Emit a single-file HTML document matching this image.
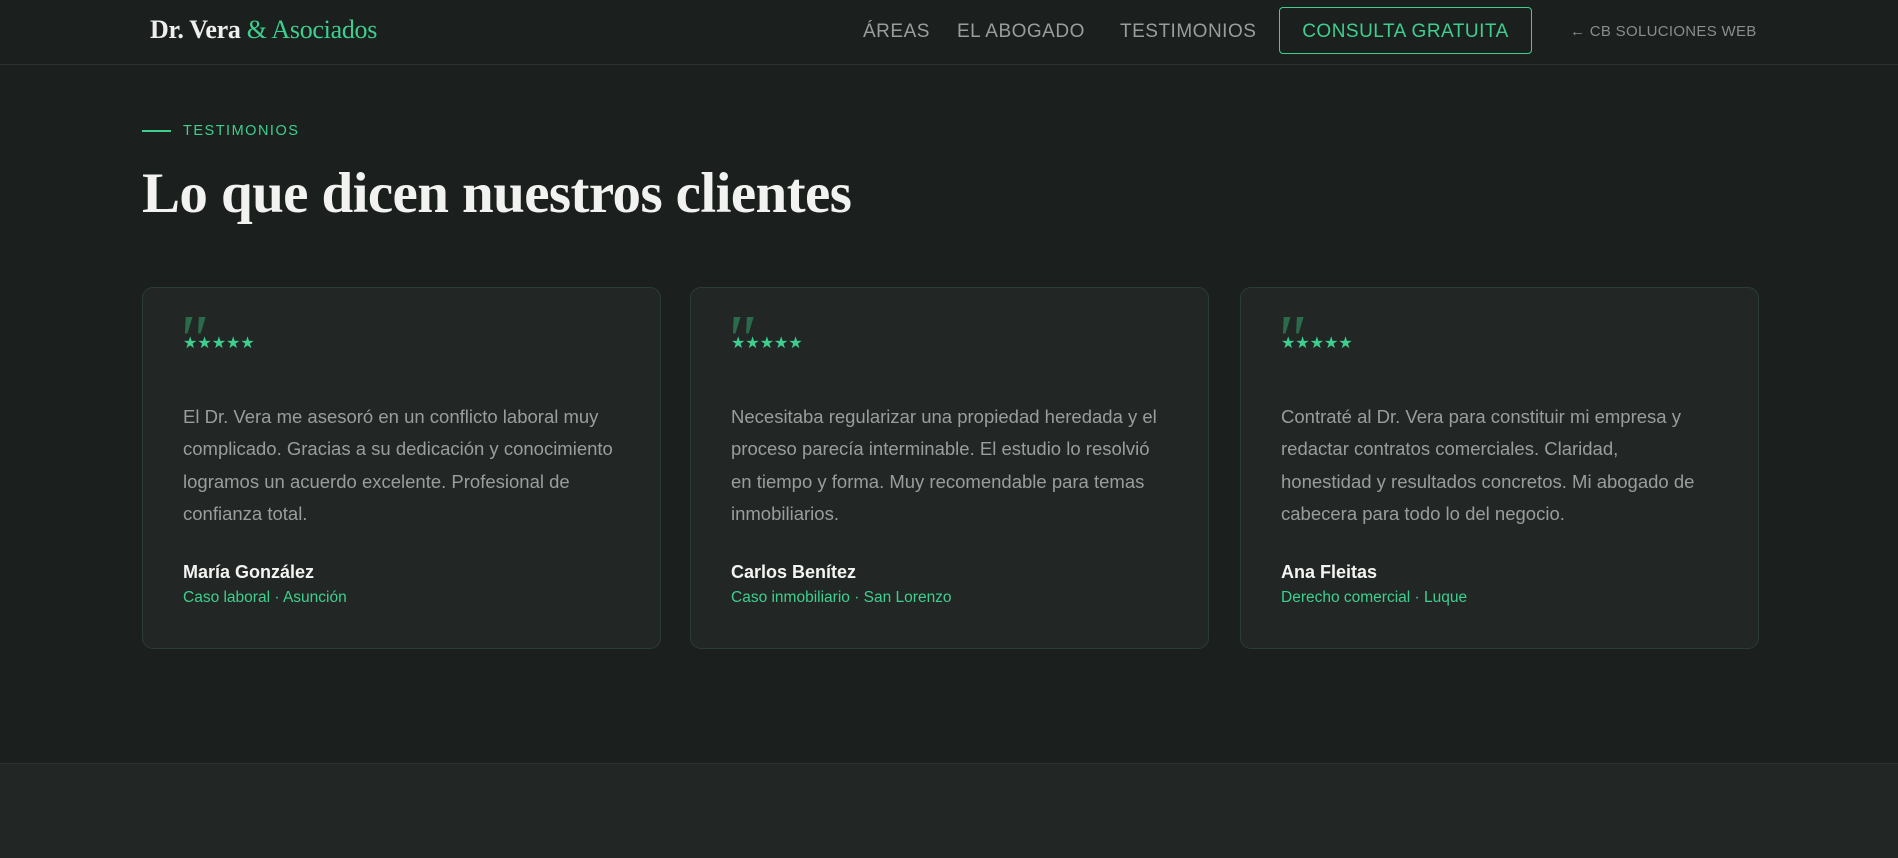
<!DOCTYPE html>
<html><head><meta charset="utf-8"><style>
*{margin:0;padding:0;box-sizing:border-box}
body{width:1898px;height:858px;background:#1b1f1e;font-family:"Liberation Sans",sans-serif;overflow:hidden;position:relative}
.nav{position:absolute;top:0;left:0;width:1898px;height:65px;border-bottom:1px solid #2c3331}
.logo{position:absolute;left:150px;top:15px;font-family:"Liberation Serif",serif;font-size:26px;font-weight:bold;color:#eee;letter-spacing:-0.3px}
.logo span{color:#3ecf8e;font-weight:normal}
.nl{position:absolute;top:21px;font-size:19px;color:#9a9d9b;letter-spacing:0.5px}
.btn{position:absolute;left:1279px;top:7px;width:253px;height:47px;border:1px solid #3ecf8e;border-radius:4px;color:#3ecf8e;font-size:19px;text-align:center;line-height:47px;letter-spacing:0.5px}
.cb{position:absolute;left:1570px;top:23px;font-size:15px;color:#8a8d8b;letter-spacing:0.3px}
.eb{position:absolute;left:142px;top:123px;font-size:14.5px;color:#3ecf8e;letter-spacing:1.5px}
.eb:before{content:"";position:absolute;left:0;top:7px;width:29px;height:2px;background:#3ecf8e}
.eb span{margin-left:41px}
h1{position:absolute;left:142px;top:161px;font-family:"Liberation Serif",serif;font-size:57px;font-weight:bold;color:#f2f2f0;letter-spacing:-0.6px}
.card{position:absolute;top:287px;width:519px;height:362px;background:#222725;border:1px solid #2a3d33;border-radius:11px}
.q{position:absolute;left:33px;top:18px;font-family:"Liberation Serif",serif;font-size:70px;font-style:italic;color:#2a6b4c;line-height:1}
.st{position:absolute;left:40px;top:45px;color:#3ecf8e;font-size:16px;letter-spacing:0}
.tx{position:absolute;left:40px;top:113px;width:432px;font-size:18.5px;line-height:32.3px;color:#9a9d9b}
.nm{position:absolute;left:40px;top:274px;font-size:18px;font-weight:bold;color:#f4f4f2}
.sb{position:absolute;left:40px;top:301px;font-size:15.5px;color:#3ecf8e}
.foot{position:absolute;top:763px;left:0;width:1898px;height:95px;background:#222624;border-top:1px solid #2c3331}
</style></head><body>
<div class="nav">
<div class="logo">Dr. Vera <span>&amp; Asociados</span></div>
<div class="nl" style="left:863px">ÁREAS</div>
<div class="nl" style="left:957px">EL ABOGADO</div>
<div class="nl" style="left:1120px">TESTIMONIOS</div>
<div class="btn">CONSULTA GRATUITA</div>
<div class="cb">← CB SOLUCIONES WEB</div>
</div>
<div class="eb"><span>TESTIMONIOS</span></div>
<h1>Lo que dicen nuestros clientes</h1>
<div class="card" style="left:142px"><div class="q">"</div><div class="st">★★★★★</div>
<div class="tx">El Dr. Vera me asesoró en un conflicto laboral muy complicado. Gracias a su dedicación y conocimiento logramos un acuerdo excelente. Profesional de confianza total.</div>
<div class="nm">María González</div><div class="sb">Caso laboral · Asunción</div></div>
<div class="card" style="left:690px"><div class="q">"</div><div class="st">★★★★★</div>
<div class="tx">Necesitaba regularizar una propiedad heredada y el proceso parecía interminable. El estudio lo resolvió en tiempo y forma. Muy recomendable para temas inmobiliarios.</div>
<div class="nm">Carlos Benítez</div><div class="sb">Caso inmobiliario · San Lorenzo</div></div>
<div class="card" style="left:1240px"><div class="q">"</div><div class="st">★★★★★</div>
<div class="tx">Contraté al Dr. Vera para constituir mi empresa y redactar contratos comerciales. Claridad, honestidad y resultados concretos. Mi abogado de cabecera para todo lo del negocio.</div>
<div class="nm">Ana Fleitas</div><div class="sb">Derecho comercial · Luque</div></div>
<div class="foot"></div>
</body></html>
